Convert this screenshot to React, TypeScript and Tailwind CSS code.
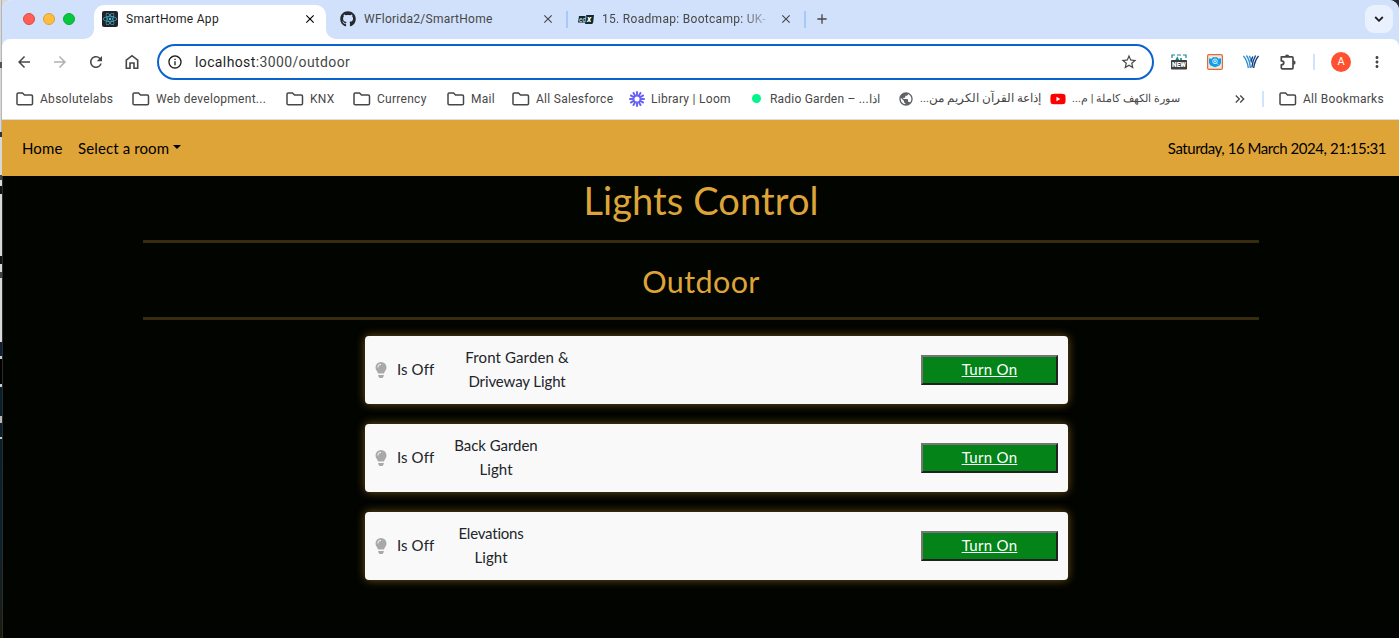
import React from "react";
import { FaReact, FaGithub, FaYoutube } from "react-icons/fa";
import {
  MdArrowBack,
  MdArrowForward,
  MdRefresh,
  MdInfoOutline,
  MdStarBorder,
  MdClose,
  MdAdd,
  MdMoreVert,
  MdKeyboardDoubleArrowRight,
  MdPublic,
} from "react-icons/md";

const FolderIcon = () => (
  <svg width="18" height="14" viewBox="0 0 18 14" fill="none" stroke="#474747" strokeWidth="1.5" className="shrink-0">
    <path d="M1 2.2C1 1.4 1.5 1 2.2 1h4.3l2 2h6.8c.8 0 1.2.4 1.2 1.2v7.3c0 .8-.4 1.2-1.2 1.2H2.2c-.8 0-1.2-.4-1.2-1.2z" />
  </svg>
);

const LoomIcon = () => (
  <svg width="16" height="16" viewBox="-8 -8 16 16" stroke="#625df5" strokeWidth="1.9" className="shrink-0">
    {[0, 30, 60, 90, 120, 150, 180, 210, 240, 270, 300, 330].map((a) => (
      <path key={a} d="M0-3.2V-7.8" transform={`rotate(${a})`} />
    ))}
    <circle r="3.2" fill="none" strokeWidth="1.3" />
  </svg>
);

const EdxIcon = () => (
  <svg width="16" height="11" viewBox="0 0 16 11" className="shrink-0">
    <path d="M1 2h7l.4-1H16l-.8 7.500-1 1.500H7l.4-1.500H0z" fill="#0b2b30" />
    <text x="1" y="7.500" fontSize="6.500" fontWeight="500" fontStyle="italic" fontFamily="Roboto, sans-serif" fill="#c9d3dc">ed</text>
    <text x="9" y="8" fontSize="8.500" fontWeight="800" fontStyle="italic" fontFamily="Roboto, sans-serif" fill="#fff">x</text>
  </svg>
);

const NewIcon = () => (
  <svg width="16" height="16" viewBox="0 0 16 16" className="shrink-0">
    <path d="M1 4V1h3M6 1h4M12 1h3v3" fill="none" stroke="#14868c" strokeWidth="1.200" />
    <path d="M5 6.500l1.300-2.500 1.200 2.500M10 6.500V4" fill="none" stroke="#14868c" strokeWidth="1.600" />
    <rect y="6" width="16" height="9.500" rx=".8" fill="#3b3f41" />
    <text x="8" y="13.200" textAnchor="middle" fontSize="6.500" fontWeight="900" fontFamily="Roboto, sans-serif" fill="#fff">NEW</text>
  </svg>
);

const EyeIcon = () => (
  <svg width="16" height="16" viewBox="0 0 16 16" className="shrink-0">
    <rect x=".6" y=".6" width="14.800" height="14.800" rx="1.500" fill="#eee6e2" stroke="#e0692f" strokeWidth="1.200" />
    <path d="M2 4.500l2.500.3L6 3.200h4l1.500 1.500L14 4.300V9l-1.500 2.500-4.500 1.800-4.500-1.800L2 9z" fill="#109fe6" />
    <circle cx="8" cy="7.300" r="2.300" fill="#109fe6" stroke="#fff" strokeWidth=".8" />
    <path d="M8 6.200v2.200M6.900 7.300h2.200M9.700 9.200l1.500 1.500" stroke="#fff" strokeWidth=".7" />
  </svg>
);

const WaveIcon = () => (
  <svg width="16" height="16" viewBox="0 0 16 16" fill="none" strokeWidth="1.400" className="shrink-0">
    <path d="M.4 2C3 5 4.600 9 5.300 14M3.400 1.500c2.400 3 3.600 7 3.900 12.500M6.300 1.800c1.300 2 2 4 2.300 7" stroke="#2f8fd0" />
    <path d="M15.600 2C13 5 11.400 9 10.700 14M12.600 1.500C10.400 5 9.300 9 8.900 13.500M9.800 2.500C9.300 4 8.500 5 8.200 7.500" stroke="#123c82" />
  </svg>
);

const HomeIcon = () => (
  <svg width="14" height="16" viewBox="0 0 14 16" fill="none" stroke="#474747" strokeWidth="1.600" className="shrink-0">
    <path d="M1.300 6.200L7 1.700l5.700 4.500v8H9V9H5v5.200H1.300z" />
  </svg>
);

const PuzzleIcon = () => (
  <svg width="18" height="18" viewBox="0 0 18 18" className="shrink-0">
    <path
      d="M2.300 3.800H13a1 1 0 0 1 1 1v10a1 1 0 0 1-1 1H3.300a1 1 0 0 1-1-1v-3c1.600 0 2.500-.8 2.500-2s-.9-2-2.500-2z"
      fill="none"
      stroke="#474747"
      strokeWidth="1.700"
      strokeLinejoin="round"
    />
    <path d="M6 3.500a2.100 2.100 0 0 1 4.200 0zM14.500 7.600a2.100 2.100 0 0 1 0 4.200z" fill="#474747" />
  </svg>
);

const BulbIcon = () => (
  <svg width="12" height="16" viewBox="0 0 12 16" className="shrink-0">
    <path d="M6 0a5.500 5.500 0 0 0-5.500 5.500c0 2.400 1.900 3.700 2.600 6.100h5.800c.7-2.400 2.600-3.700 2.600-6.100A5.500 5.500 0 0 0 6 0z" fill="#a9a9a9" />
    <path d="M2.800 5.500A3.100 3.100 0 0 1 6 2.300" fill="none" stroke="#f9f9f9" strokeWidth="1" />
    <path d="M3.200 13h5.600v.9L7.600 16H4.400l-1.200-2.100z" fill="#a9a9a9" />
  </svg>
);

const Folder = ({ label, className }: { label: string; className: string }) => (
  <div className={`flex shrink-0 items-center gap-[6px] whitespace-nowrap ${className}`}>
    <FolderIcon />
    <span>{label}</span>
  </div>
);

const lights = [
  { id: 1, lines: [["Front Garden &", "tracking-[0.12px]"], ["Driveway Light", "tracking-[-0.1px]"]], width: "w-[126px]" },
  { id: 2, lines: [["Back Garden", "tracking-[-0.05px]"], ["Light", "tracking-[0.1px]"]], width: "w-[84px]" },
  { id: 3, lines: [["Elevations", "tracking-[-0.2px]"], ["Light", "tracking-[0.1px]"]], width: "w-[74px]" },
];

function TabStrip() {
  return (
    <div className="flex h-[39px] shrink-0 items-stretch rounded-t-[10px] bg-[#d1e1fb] text-[12px] text-[#474747]">
      <div className="flex w-[92px] items-center gap-2 pb-px pl-[21px]">
        <i className="size-3 rounded-full border border-[#e2483f] bg-[#ff5f57]" />
        <i className="size-3 rounded-full border border-[#e0a030] bg-[#febc40]" />
        <i className="size-3 rounded-full border border-[#10a83a] bg-[#05c840]" />
      </div>
      <div className="relative mt-[5px] flex w-[232px] items-center rounded-t-[10px] bg-white pr-[9px] pb-[6px] pl-2 text-[#1f1f1f]">
        <svg width="10" height="10" className="absolute bottom-0 -left-[10px]"><path d="M10 0v10H0A10 10 0 0 0 10 0" fill="#fff" /></svg>
        <svg width="10" height="10" className="absolute -right-[10px] bottom-0"><path d="M0 0v10h10A10 10 0 0 1 0 0" fill="#fff" /></svg>
        <div className="flex size-4 items-center justify-center rounded-[2px] bg-[#20232a]">
          <FaReact className="size-[14px] text-[#48b8d4]" />
        </div>
        <span className="ml-2 tracking-[0.3px]">SmartHome App</span>
        <MdClose className="ml-auto size-[14px] text-black" />
      </div>
      <div className="flex w-[240px] items-center pr-[11px] pb-px pl-[14px]">
        <FaGithub className="size-4 text-[#24292f]" />
        <span className="ml-2 tracking-[0.25px]">WFlorida2/SmartHome</span>
        <MdClose className="ml-auto size-[14px]" />
      </div>
      <i className="my-[11px] w-[2px] bg-[#a8c7fa]" />
      <div className="flex w-[236px] items-center pr-[11px] pb-px pl-[10px]">
        <EdxIcon />
        <span className="ml-[8px] whitespace-nowrap tracking-[0.3px] [mask-image:linear-gradient(to_right,black_85%,transparent_105%)]">
          15. Roadmap: Bootcamp: UK-
        </span>
        <MdClose className="ml-auto size-[14px] shrink-0" />
      </div>
      <i className="my-[11px] w-[2px] bg-[#a8c7fa]" />
      <MdAdd className="mt-[11px] ml-[8px] size-4" />
      <div className="mt-[5px] mr-[6px] ml-auto flex size-7 items-center justify-center rounded-[9px] bg-[#e9f1fe]">
        <svg width="10" height="6" viewBox="0 0 10 6" fill="none" stroke="#1f1f1f" strokeWidth="1.800">
          <path d="M1.200 1L5 4.800 8.800 1" />
        </svg>
      </div>
    </div>
  );
}

function Toolbar() {
  return (
    <div className="shrink-0 bg-[#d1e1fb]">
      <div className="flex h-[46px] items-center rounded-t-[8px] bg-white text-[#474747]">
        <MdArrowBack className="ml-[13px] size-[18px]" />
        <MdArrowForward className="ml-[18px] size-[18px] text-[#b0b0b0]" />
        <MdRefresh className="ml-[18px] size-[18px]" />
        <div className="ml-5"><HomeIcon /></div>
        <div className="ml-[18px] flex h-9 w-[997px] items-center rounded-full border-2 border-[#0b63ce] bg-white pr-[14px] pl-2">
          <MdInfoOutline className="size-4 text-[#1f1f1f]" />
          <span className="ml-[12px] text-[14px] tracking-[0.38px] text-[#474747]">
            <span className="text-[#1f1f1f]">localhost</span>:3000/outdoor
          </span>
          <MdStarBorder className="ml-auto size-[18px]" />
        </div>
        <div className="ml-[17px] flex items-center gap-5">
          <NewIcon />
          <EyeIcon />
          <WaveIcon />
          <PuzzleIcon />
        </div>
        <i className="ml-4 h-4 w-[2px] bg-[#d3e3fd]" />
        <div className="ml-4 flex size-5 items-center justify-center rounded-full bg-[#ff5130] text-[11px] text-white">A</div>
        <MdMoreVert className="ml-[17px] size-[18px]" />
      </div>
    </div>
  );
}

function Bookmarks() {
  return (
    <div className="flex h-[35px] shrink-0 items-center border-b border-[#dcdcdc] pb-[7px] pl-[14px] text-[12px] tracking-[0.28px] text-[#474747]">
      <Folder label="Absolutelabs" className="w-[116px]" />
      <Folder label="Web development..." className="w-[154px]" />
      <Folder label="KNX" className="w-[67px]" />
      <Folder label="Currency" className="w-[94px]" />
      <Folder label="Mail" className="w-[65px]" />
      <Folder label="All Salesforce" className="w-[117px]" />
      <div className="flex w-[123px] shrink-0 items-center gap-[6px] whitespace-nowrap">
        <LoomIcon />Library | Loom
      </div>
      <div className="flex w-[146px] shrink-0 items-center gap-[9px] whitespace-nowrap">
        <i className="size-[9px] rounded-full bg-[#00f58b]" />
        <span className="tracking-[0.2px]">Radio Garden – ...اذا</span>
      </div>
      <div className="flex w-[152px] shrink-0 items-center gap-[6px] whitespace-nowrap">
        <MdPublic className="size-4 text-[#5f6368]" />
        <span dir="rtl" className="pt-px text-[11.500px]">إذاعة القرآن الكريم من...</span>
      </div>
      <div className="flex w-[182px] shrink-0 items-center gap-[6px] whitespace-nowrap">
        <FaYoutube className="size-4 text-[#f00]" />
        <span dir="rtl" className="pt-px text-[11.300px]">سورة الكهف كاملة | م...</span>
      </div>
      <MdKeyboardDoubleArrowRight className="size-4" />
      <i className="ml-[14px] h-4 w-[2px] bg-[#d3e3fd]" />
      <Folder label="All Bookmarks" className="ml-[15px]" />
    </div>
  );
}

export default function App() {
  return (
    <div className="flex h-[638px] w-[1399px] overflow-hidden bg-[linear-gradient(to_right,#d8d8d8_50%,#232b3a_50%)] font-['Roboto','Noto_Sans',sans-serif]">
      <div className="flex w-[2px] shrink-0 flex-col">
        <div className="h-[62px] border-r border-[#b5b5b5] bg-[#d8d8d8]" />
        <div className="h-[6px] bg-[#555]" />
        <div className="h-[64px] border-r border-[#b5b5b5] bg-[#d8d8d8]" />
        <div className="h-[5px] bg-[#333]" />
        <div className="h-[38px] bg-[#d8d8d8]" />
        <div className="h-[5px] bg-[#444]" />
        <div className="h-[6px] bg-[#d8d8d8]" />
        <div className="h-[8px] bg-[#111]" />
        <div className="h-[62px] bg-[#d8d8d8]" />
        <div className="h-[8px] bg-[#111]" />
        <div className="h-[8px] bg-[#d8d8d8]" />
        <div className="h-[6px] bg-[#444]" />
        <div className="h-[64px] bg-[#d8d8d8]" />
        <div className="h-[14px] bg-[#0c2038]" />
        <div className="h-[3px] bg-[#c8c8c8]" />
        <div className="h-[25px] bg-black" />
        <div className="h-[3px] bg-[#c8c8c8]" />
        <div className="h-[29px] bg-[#08202e]" />
        <div className="h-[7px] bg-[#b8b8b8]" />
        <div className="h-[14px] bg-[#08202e]" />
        <div className="h-[2px] bg-[#c8c8c8]" />
        <div className="flex-1 bg-linear-to-b from-[#08202e] via-[#0b2230] to-[#1b1c0c]" />
      </div>
      <div className="flex w-[1397px] flex-col rounded-t-[10px] bg-white">
        <TabStrip />
        <Toolbar />
        <Bookmarks />
        <nav className="flex h-[56px] shrink-0 items-center bg-[#dfa437] pr-[13px] pl-5 font-['Gill_Sans','Lato',sans-serif] text-[15px] text-black">
          <a className="w-[56px] shrink-0 tracking-[0.15px]">Home</a>
          <a className="flex items-center gap-1 whitespace-nowrap tracking-[0.12px]">
            Select a room
            <i className="mb-[2px] border-x-[4px] border-t-[4px] border-x-transparent border-t-black" />
          </a>
          <time className="ml-auto whitespace-nowrap tracking-[-0.45px]">Saturday, 16 March 2024, 21:15:31</time>
        </nav>
        <main className="flex flex-1 flex-col items-center border-l border-[#2b2b2b] bg-[#020400] font-['Gill_Sans','Lato',sans-serif]">
          <h1 className="box-content flex h-[64px] w-[1116px] items-start justify-center border-b-[3px] border-[#dfa437]/25 text-[38px] leading-[49px] tracking-[0.1px] text-[#dfa437]">
            Lights Control
          </h1>
          <h2 className="box-content flex h-[70px] w-[1116px] items-center justify-center border-b-[3px] border-[#dfa437]/25 pt-[4px] text-[30.500px] tracking-[0.4px] text-[#dfa437]">
            Outdoor
          </h2>
          <section className="mt-4 ml-[31px] flex w-[703px] flex-col gap-5">
            {lights.map((l) => (
              <article
                key={l.id}
                className="flex h-[68px] items-center rounded-[4px] bg-[#f9f9f9] px-[10px] text-[15px] leading-6 text-[#212529] shadow-[0_0_10px_rgba(223,164,55,0.5)]"
              >
                <BulbIcon />
                <span className="ml-[10px] w-[47px] pb-[2px] tracking-[0.1px] whitespace-nowrap">Is Off</span>
                <div className={`ml-[10px] pb-[2px] text-center whitespace-nowrap ${l.width}`}>
                  {l.lines.map(([t, tracking]) => (
                    <div key={t} className={tracking}>{t}</div>
                  ))}
                </div>
                <button className="ml-auto h-[30px] w-[137px] border-2 border-t-[#767676] border-r-[#212121] border-b-[#212121] border-l-[#767676] bg-[#038318] pb-[2px] leading-[24px] tracking-[0.3px] text-white underline">
                  Turn On
                </button>
              </article>
            ))}
          </section>
        </main>
      </div>
    </div>
  );
}
